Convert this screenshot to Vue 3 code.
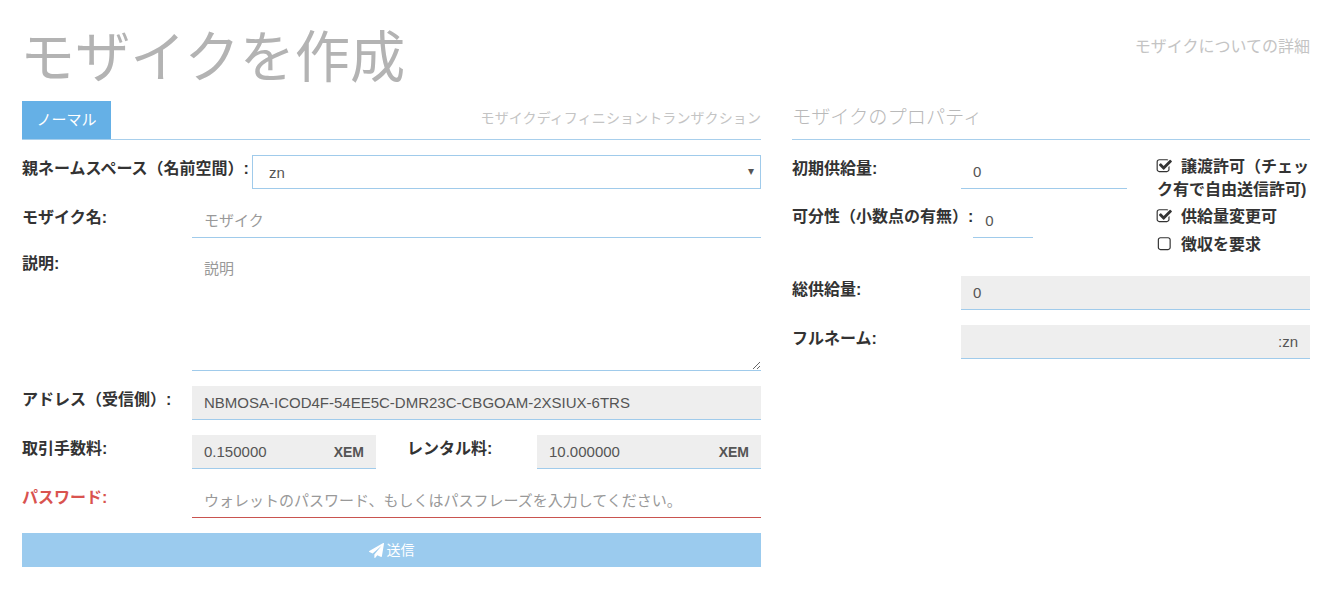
<script setup>
const icons = {
  check: 'M1472 930v318q0 119-84.5 203.5t-203.5 84.5h-832q-119 0-203.5-84.5t-84.5-203.5v-832q0-119 84.5-203.5t203.5-84.5h832q63 0 117 25 15 7 18 23 3 17-9 29l-49 49q-10 10-23 10-3 0-9-2-23-6-45-6h-832q-66 0-113 47t-47 113v832q0 66 47 113t113 47h832q66 0 113-47t47-113v-254q0-13 9-22l64-64q10-10 23-10 6 0 12 3 20 8 20 29zm231-489l-814 814q-24 24-57 24t-57-24l-430-430q-24-24-24-57t24-57l110-110q24-24 57-24t57 24l263 263 647-647q24-24 57-24t57 24l110 110q24 24 24 57t-24 57z',
  empty: 'M1312 256h-832q-66 0-113 47t-47 113v832q0 66 47 113t113 47h832q66 0 113-47t47-113v-832q0-66-47-113t-113-47zm288 160v832q0 119-84.5 203.5t-203.5 84.5h-832q-119 0-203.5-84.5t-84.5-203.5v-832q0-119 84.5-203.5t203.5-84.5h832q119 0 203.5 84.5t84.5 203.5z',
  plane: 'M1764 11q33 24 27 64l-256 1536q-5 29-32 45-14 8-31 8-11 0-24-5l-453-185-242 295q-18 23-49 23-13 0-22-4-19-7-30.5-23.5t-11.5-36.5v-349l864-1059-1069 925-395-162q-37-14-40-55-2-40 32-59l1664-960q15-9 32-9 20 0 36 11z'
}
</script>

<template>
  <div class="page">
    <header class="head">
      <h1>モザイクを作成</h1>
      <a class="more">モザイクについての詳細</a>
    </header>
    <div class="cols">
      <section class="left">
        <div class="tabs">
          <span class="tab">ノーマル</span>
          <span class="tab-link">モザイクディフィニショントランザクション</span>
        </div>
        <div class="row">
          <label class="lbl parent">親ネームスペース（名前空間）:</label>
          <div class="select">
            <select class="sel"><option>zn</option></select>
            <span class="caret">▾</span>
          </div>
        </div>
        <div class="row">
          <label class="lbl w170">モザイク名:</label>
          <input class="field grow" placeholder="モザイク" />
        </div>
        <div class="row">
          <label class="lbl w170 short">説明:</label>
          <textarea class="field grow area" placeholder="説明"></textarea>
        </div>
        <div class="row">
          <label class="lbl w170">アドレス（受信側）:</label>
          <input class="field grow ro" readonly value="NBMOSA-ICOD4F-54EE5C-DMR23C-CBGOAM-2XSIUX-6TRS" />
        </div>
        <div class="row">
          <label class="lbl w170">取引手数料:</label>
          <div class="money fee"><span>0.150000</span><b>XEM</b></div>
          <label class="lbl rent">レンタル料:</label>
          <div class="money grow"><span>10.000000</span><b>XEM</b></div>
        </div>
        <div class="row">
          <label class="lbl w170 err">パスワード:</label>
          <input class="field grow errf" placeholder="ウォレットのパスワード、もしくはパスフレーズを入力してください。" />
        </div>
        <button class="send">
          <svg class="plane" viewBox="0 0 1792 1792"><path fill="currentColor" :d="icons.plane" /></svg>
          <span>送信</span>
        </button>
      </section>

      <section class="right">
        <h2>モザイクのプロパティ</h2>
        <div class="props">
          <div class="props-main">
            <div class="row">
              <label class="lbl w169">初期供給量:</label>
              <input class="field supply" value="0" />
            </div>
            <div class="row">
              <label class="lbl divisibility">可分性（小数点の有無）:</label>
              <input class="field div" value="0" />
            </div>
          </div>
          <ul class="checks">
            <li class="two">
              <svg viewBox="0 0 1792 1792"><path fill="currentColor" :d="icons.check" /></svg>
              譲渡許可（チェック有で自由送信許可)
            </li>
            <li>
              <svg viewBox="0 0 1792 1792"><path fill="currentColor" :d="icons.check" /></svg>
              供給量変更可
            </li>
            <li>
              <svg viewBox="0 0 1792 1792"><path fill="currentColor" :d="icons.empty" /></svg>
              徴収を要求
            </li>
          </ul>
        </div>
        <div class="row">
          <label class="lbl w169">総供給量:</label>
          <input class="field grow ro" readonly value="0" />
        </div>
        <div class="row">
          <label class="lbl w169">フルネーム:</label>
          <input class="field grow ro end" readonly value=":zn" />
        </div>
      </section>
    </div>
  </div>
</template>

<style scoped>
.page {
  width: 1288px;
  padding: 0 23px 0 22px;
  font-family: "Liberation Sans", "Noto Sans CJK JP", sans-serif;
  font-size: 15px;
  color: #333;
}
.head {
  display: flex;
  justify-content: space-between;
  align-items: flex-start;
  height: 101px;
}
h1 {
  margin: 25px 0 0 -2px;
  font-size: 55.2px;
  line-height: 66px;
  font-weight: 400;
  color: #b3b3b3;
}
.more {
  margin-top: 37px;
  font-size: 16px;
  line-height: 20px;
  color: #c4c4c4;
}
.cols {
  display: flex;
  gap: 31px;
  align-items: flex-start;
}
.left { width: 739px; flex: none; }
.right { width: 518px; flex: none; }
.tabs {
  display: flex;
  justify-content: space-between;
  align-items: flex-start;
  height: 38px;
  border-bottom: 1px solid #a8cfec;
  margin-bottom: 15px;
}
.tab {
  width: 89px;
  height: 38px;
  background: #65b0e6;
  color: #fff;
  font-size: 15px;
  line-height: 37px;
  text-align: center;
}
.tab-link {
  margin-top: 7px;
  font-size: 14px;
  letter-spacing: 0.1px;
  line-height: 20px;
  color: #c4c4c4;
}
h2 {
  margin: 0 0 15px;
  height: 38px;
  border-bottom: 1px solid #a8cfec;
  font-size: 19.2px;
  line-height: 34px;
  font-weight: 300;
  color: #b9b9b9;
}
.row {
  display: flex;
  align-items: flex-start;
  margin-bottom: 15px;
}
.lbl {
  flex: none;
  font-size: 16px;
  font-weight: 700;
  line-height: 28px;
  color: #333;
}
.parent { margin-right: 3px; }
.divisibility { margin-top: -1px; }
.w170 { width: 170px; }
.w169 { width: 169px; }
.short { margin-top: -3px; }
.err { color: #d9534f; }
.rent { width: 130px; margin-left: 31px; }
.grow { flex: 1; min-width: 0; }
.field {
  box-sizing: border-box;
  height: 34px;
  border: 0;
  border-bottom: 1px solid #a0cbeb;
  border-radius: 0;
  outline: 0;
  padding: 6px 12px;
  background: #fff;
  font-family: inherit;
  font-size: 15px;
  color: #555;
}
.field::placeholder { color: #999; opacity: 1; }
.area {
  display: block;
  height: 118px;
  resize: vertical;
  padding-top: 4px;
}
.ro { background: #eee; }
.end { text-align: right; }
.errf { border-bottom-color: #c9534f; }
.select {
  position: relative;
  flex: 1;
}
.sel {
  display: block;
  box-sizing: border-box;
  width: 100%;
  height: 34px;
  padding: 0 16px;
  border: 1px solid #a0cbeb;
  border-radius: 0;
  outline: 0;
  background: #fff;
  appearance: none;
  font-family: inherit;
  font-size: 15px;
  color: #555;
}
.caret {
  position: absolute;
  top: 8px;
  right: 7px;
  font-size: 12px;
  line-height: 16px;
  color: #555;
  pointer-events: none;
}
.money {
  box-sizing: border-box;
  display: flex;
  justify-content: space-between;
  align-items: center;
  height: 34px;
  padding: 0 12px;
  background: #eee;
  border-bottom: 1px solid #a0cbeb;
  color: #555;
}
.money b { font-size: 14px; }
.fee { width: 184px; flex: none; }
.send {
  display: flex;
  justify-content: center;
  align-items: center;
  gap: 3px;
  width: 100%;
  height: 34px;
  border: 0;
  background: #9bcbee;
  color: #fff;
  font-family: inherit;
  font-size: 14px;
}
.send span { position: relative; top: -1px; }
.plane { width: 15px; height: 15px; }
.props { display: flex; height: 121px; }
.props-main { width: 365px; flex: none; }
.supply { width: 166px; }
.div { width: 60px; }
.checks {
  list-style: none;
  margin: 0;
  padding: 0;
  width: 153px;
  font-size: 16px;
  font-weight: 700;
  line-height: 23px;
  color: #333;
}
.checks li { margin-bottom: 5px; }
.checks li.two { margin-bottom: 4px; }
.checks svg {
  width: 16.5px;
  height: 16.5px;
  margin-left: -1px;
  margin-right: 4px;
  vertical-align: -2px;
}
</style>
